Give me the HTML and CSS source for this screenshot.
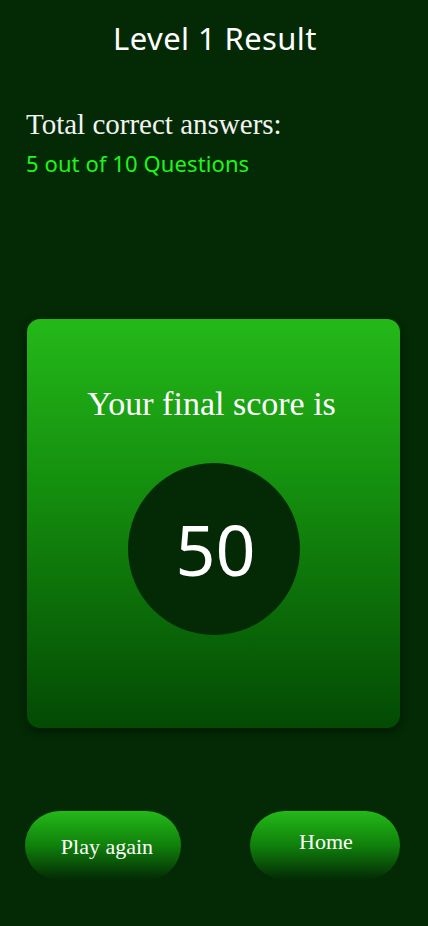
FILE: index.html
```html
<!DOCTYPE html>
<html lang="en">
<head>
<meta charset="utf-8">
<title>Level 1 Result</title>
<link rel="stylesheet" href="styles.css">
</head>
<body>
<main class="screen">
  <h1 class="title">Level 1 Result</h1>
  <section class="summary">
    <p class="summary-label">Total correct answers:</p>
    <p class="summary-value">5 out of 10 Questions</p>
  </section>
  <section class="card">
    <p class="card-label">Your final score is</p>
    <div class="score-circle"><span class="score">50</span></div>
  </section>
  <div class="actions">
    <button class="btn btn-play">Play again</button>
    <button class="btn btn-home">Home</button>
  </div>
</main>
</body>
</html>
```
FILE: styles.css
```css
html, body {
  margin: 0;
  padding: 0;
  background: #032a04;
}
.screen {
  width: 428px;
  height: 926px;
  display: flex;
  flex-direction: column;
  box-sizing: border-box;
  padding: 0 28px 0 26px;
}
.title {
  margin: 18px 0 0;
  text-align: center;
  font-family: "Noto Sans", sans-serif;
  font-weight: 400;
  font-size: 31px;
  line-height: 40px;
  color: #ffffff;
  letter-spacing: 0.4px;
  padding-left: 4px;
}
.summary {
  margin-top: 50px;
}
.summary-label {
  margin: 0;
  font-family: "Liberation Serif", serif;
  font-size: 29px;
  line-height: 32px;
  color: #f2f2f2;
}
.summary-value {
  margin: 9px 0 0;
  font-family: "Noto Sans", sans-serif;
  font-size: 22px;
  line-height: 28px;
  color: #1ff51c;
  letter-spacing: 0.1px;
}
.card {
  margin: 142px 0 0 1px;
  height: 409px;
  border-radius: 13px;
  background: linear-gradient(to bottom, #24b919 0%, #138a0d 45%, #034a03 100%);
  box-shadow: 0 3px 8px rgba(0, 0, 0, 0.45);
  display: flex;
  flex-direction: column;
  align-items: center;
}
.card-label {
  margin: 66px 0 0;
  font-family: "Liberation Serif", serif;
  font-size: 34px;
  line-height: 38px;
  color: #ffffff;
  padding-right: 4px;
}
.score-circle {
  margin-top: 40px;
  width: 172px;
  height: 172px;
  border-radius: 50%;
  background: #032a04;
  display: flex;
  align-items: center;
  justify-content: center;
}
.score {
  font-family: "Noto Sans", sans-serif;
  font-size: 70px;
  line-height: 1;
  color: #ffffff;
  margin-left: 4px;
}
.actions {
  margin-top: 83px;
  display: flex;
  justify-content: space-between;
}
.btn {
  height: 69px;
  border: none;
  border-radius: 35px;
  background: linear-gradient(to bottom, #24b919 0%, #10800b 50%, #032a04 100%);
  color: #ffffff;
  font-family: "Liberation Serif", serif;
  font-size: 22px;
  cursor: pointer;
}
.btn-play {
  width: 156px;
  margin-left: -1px;
  padding-top: 4px;
  padding-left: 14px;
}
.btn-home {
  width: 150px;
  padding-bottom: 8px;
  padding-left: 8px;
}
```
